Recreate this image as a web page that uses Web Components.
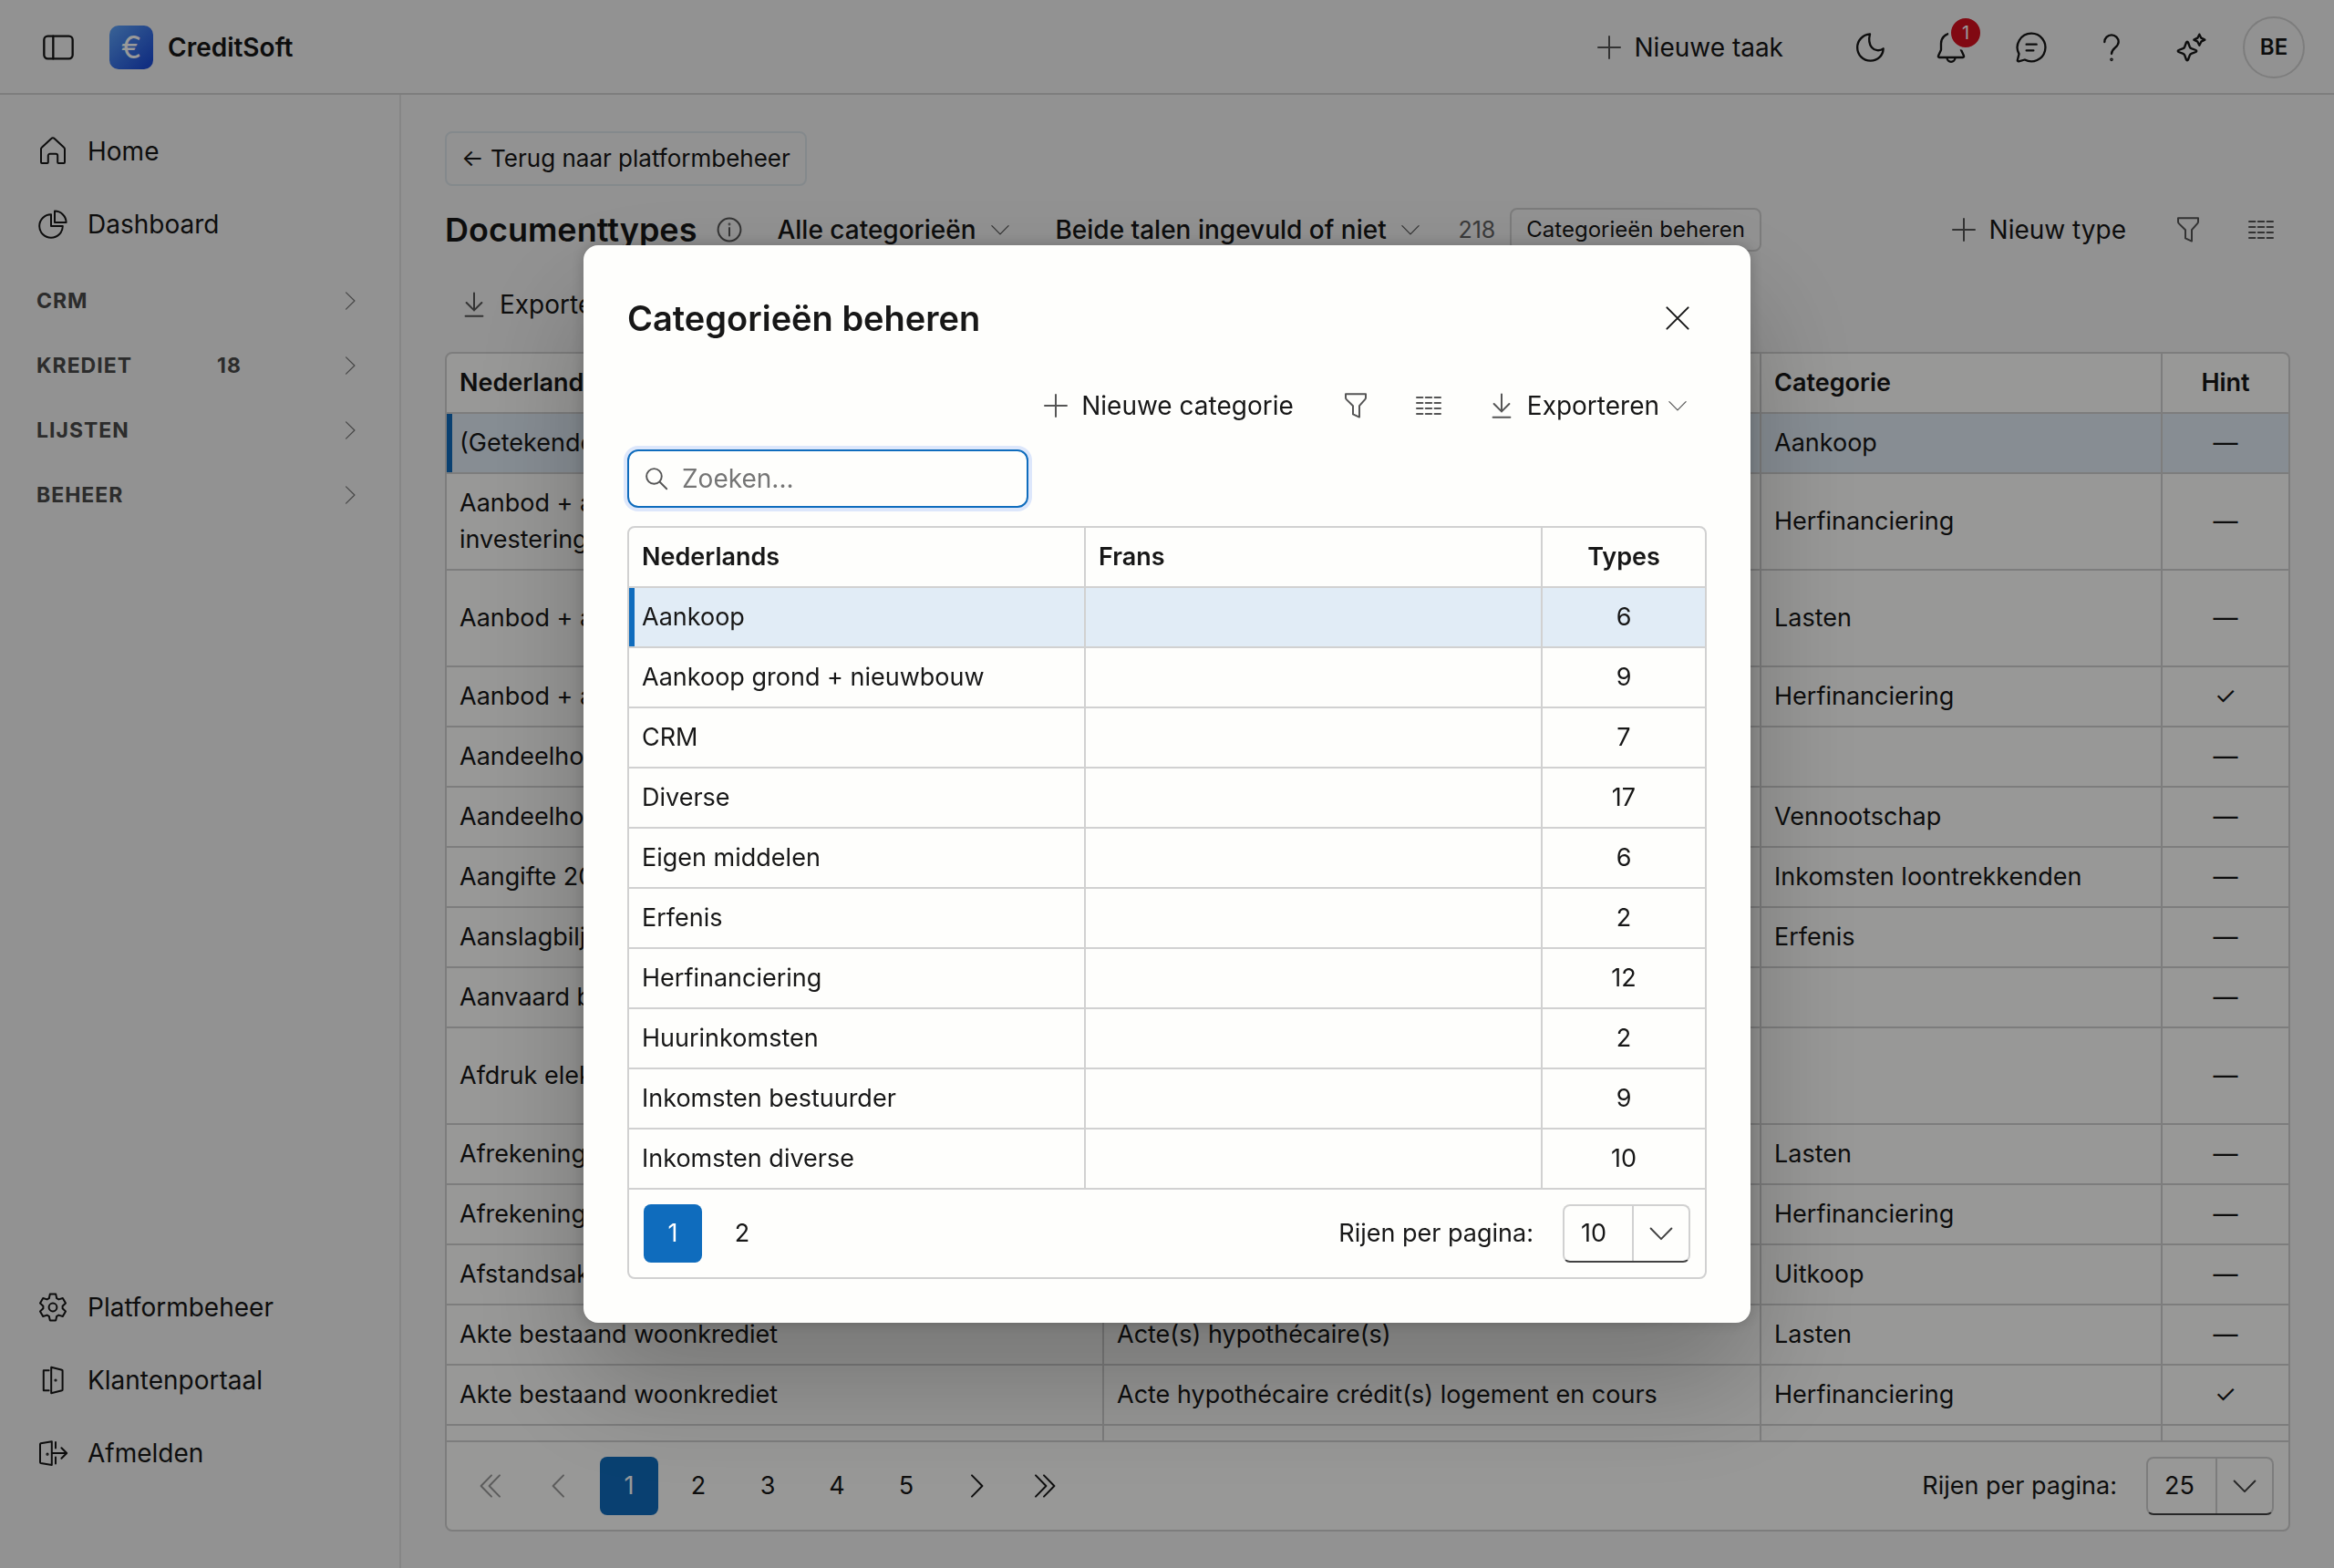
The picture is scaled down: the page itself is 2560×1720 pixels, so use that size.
<!DOCTYPE html>
<html lang="nl">
<head>
<meta charset="utf-8">
<title>CreditSoft - Documenttypes</title>
<style>
    html, body {
        margin: 0;
        height: 100%;
    }
    body {
        --bg: #f3f3f3;
        --surface: #fefefc;
        --text: #171717;
        --muted: #616161;
        --line: #d1d1d1;
        --brand: #0f6cbd;
        --selected: #e1ecf6;
        font: 27px/40px Inter, "Liberation Sans", sans-serif;
        color: var(--text);
        background: var(--bg);
        overflow: hidden;
    }
</style>
</head>
<body>
<credit-app></credit-app>

<script>
// name: [viewBox size, markup]
const icons = {
    panel: [24, '<rect x="2.6" y="4.6" width="18.8" height="14.8" rx="2.4"/><path d="M8.6 4.6v14.8"/>'],
    plus: [20, '<path d="M10 4v12M4 10h12"/>'],
    moon: [24, '<path d="M11.4 3.2C10.6 6.5 10.900 10 12.600 12c1.800 2.200 5.200 2.600 7.600 .8-.2 4.700-3.800 8-8.400 8-5 0-8.700-3.900-8.700-8.800 0-4.500 3.500-8.400 8.300-8.800z"/>'],
    bell: [24, '<path d="M12 2.8a6.6 6.6 0 0 0-6.6 6.6v4.2l-1.8 4c-.2.5.1 1 .6 1h15.6c.5 0 .8-.5.6-1l-1.8-4V9.4A6.6 6.6 0 0 0 12 2.8zM9.3 18.8a2.7 2.7 0 0 0 5.4 0"/>'],
    chat: [24, '<path d="M12 2.8a9.2 9.2 0 1 1-4.3 17.3l-4 1.1c-.5.1-.9-.3-.8-.8l1-4.1A9.2 9.2 0 0 1 12 2.8zM8.8 10h6.6M8.8 14h4.6"/>'],
    question: [24, '<path d="M7.4 8.4a4.6 4.6 0 0 1 9.2 0c0 3.7-4.6 4-4.6 7.8"/><circle cx="12" cy="20" r=".4"/>'],
    sparkle: [24, '<path d="M9 8.2c.3 0 .5.2.6.5l1.1 3c.2.5.5.8 1 1l3 1.1c.6.2.6 1 0 1.2l-3 1.1c-.5.2-.8.5-1 1l-1.1 3c-.2.6-1 .6-1.2 0l-1.1-3c-.2-.5-.5-.8-1-1l-3-1.1c-.6-.2-.6-1 0-1.2l3-1.1c.5-.2.8-.5 1-1l1.1-3c.1-.3.3-.5.6-.5zM17 3.4l1.2 2.4 2.4 1.2-2.4 1.2L17 10.6l-1.2-2.4L13.4 7l2.4-1.2z"/>'],
    home: [20, '<path d="M3.5 8.7c0-.3.1-.6.4-.8L9.3 2.9c.4-.4 1-.4 1.4 0l5.4 5c.3.2.4.5.4.8V16c0 .3-.2.5-.5.5h-2.9a.5.5 0 0 1-.5-.5v-3.600c0-.6-.4-1-1-1H8.400c-.6 0-1 .4-1 1V16c0 .3-.2.5-.5.5H4a.5.5 0 0 1-.5-.5z"/>'],
    chart: [20, '<path d="M9 4.6V11h6.4A6.4 6.4 0 1 1 9 4.6zM11 2.8V9h6.3A6.3 6.3 0 0 0 11 2.8z"/>'],
    gear: [20, '<path d="M8.4 2.8h3.2l.5 2.3 1.1.6 2.200-.7L17 7.800l-1.700 1.600v1.200l1.700 1.600-1.600 2.800-2.200-.7-1.100.6-.5 2.300H8.400l-.5-2.300-1.100-.6-2.200.7L3 12.200l1.700-1.600V9.400L3 7.800 4.600 5l2.200.7 1.100-.6z"/><circle cx="10" cy="10" r="2.2"/>'],
    door: [20, '<path d="M7.8 4.6H4.9v11h2.9M9.1 2.900l5.900 1.500c.2 0 .3.200.3.400v10.400c0 .2-.1.400-.3.400L9.100 17.100z"/><circle cx="11.5" cy="10" r=".3"/>'],
    logout: [20, '<path d="M3 5.100c0-.2.200-.4.400-.5l6-1v12.900l-6-1a.5.500 0 0 1-.4-.5zM11.500 4v3.300M11.500 12.300v3.500M9.400 10h8M14.700 7.100l2.900 2.900-2.900 2.900"/><circle cx="7" cy="10.6" r=".3"/>'],
    info: [20, '<circle cx="10" cy="10" r="6.2"/><path d="M10 9v4.2"/><circle cx="10" cy="7" r=".2"/>'],
    filter: [20, '<path d="M4.5 3.6h11v2c0 .4-.2.8-.5 1.1l-3 3.4v6.2l-3.5-1.600v-4.600L5 6.700c-.3-.3-.5-.7-.5-1.100z"/>'],
    columns: [20, '<path d="M3.5 5.5h3.2M8.4 5.5h3.2M13.3 5.5h3.2M3.5 8.5h3.2M8.4 8.5h3.2M13.3 8.5h3.2M3.5 11.5h3.2M8.4 11.5h3.2M13.3 11.5h3.2M3.5 14.5h3.2M8.4 14.5h3.2M13.3 14.5h3.2"/>'],
    download: [20, '<path d="M10 3.7v9.5M5.8 9l4.2 4.2L14.2 9M5.3 16.4h9.4"/>'],
    down: [20, '<path d="M2.4 6.3l7.6 7.8 7.6-7.8"/>'],
    right: [20, '<path d="M6.3 2.4l7.8 7.600-7.800 7.600"/>'],
    search: [20, '<circle cx="8.4" cy="8.4" r="5.2"/><path d="M12.2 12.200l4.800 4.800"/>'],
    close: [20, '<path d="M4.2 4.2l11.6 11.6M15.8 4.2L4.2 15.8"/>'],
    first: [20, '<path d="M10.5 4.2L4.8 10l5.7 5.8M15 4.2L9.3 10l5.7 5.8"/>'],
    prev: [20, '<path d="M12 4.2L6.3 10l5.7 5.8"/>'],
    next: [20, '<path d="M8 4.2l5.7 5.8L8 15.8"/>'],
    last: [20, '<path d="M5 4.2l5.7 5.8L5 15.8M9.5 4.2l5.7 5.8-5.7 5.8"/>'],
};

class UiIcon extends HTMLElement {
    constructor() {
        super();
        this.attachShadow({ mode: 'open' });
    }

    connectedCallback() {
        const [box, shape] = icons[this.getAttribute('name')];
        const size = this.getAttribute('size') || 40;
        const stroke = this.getAttribute('stroke') || (box === 24 ? 1.4 : 1);
        this.shadowRoot.innerHTML = `
            <style>
            :host { display: inline-flex; flex: none; }
            </style>
            <svg width="${size}" height="${size}" viewBox="0 0 ${box} ${box}" fill="none" stroke="currentColor"
                stroke-width="${stroke}" stroke-linecap="round" stroke-linejoin="round" aria-hidden="true">${shape}</svg>
        `;
    }
}

// Flat button with an optional icon, text and menu arrow
class ToolButton extends HTMLElement {
    constructor() {
        super();
        this.attachShadow({ mode: 'open' });
    }

    connectedCallback() {
        const icon = this.getAttribute('icon');
        const label = this.getAttribute('label') || '';
        this.shadowRoot.innerHTML = `
            <style>
            :host { display: inline-flex; flex: none; font-size: 28px; }
            button {
                display: flex;
                align-items: center;
                justify-content: center;
                gap: 8px;
                height: 64px;
                min-width: 64px;
                padding: 0 20px 0 12px;
                border: 0;
                border-radius: 8px;
                background: none;
                font: inherit;
                color: inherit;
                white-space: nowrap;
            }
            button.icon-only { padding: 0; }
            ui-icon { color: var(--icon-color, #555); }
            </style>
            <button class="${label ? 'icon-only' : ''}" ${label ? `aria-label="${label}"` : ''}>
                <ui-icon name="${icon}"></ui-icon><slot></slot>
                ${this.hasAttribute('menu') ? '<ui-icon name="down" size="24"></ui-icon>' : ''}
            </button>
        `;
    }
}

class OutlineButton extends HTMLElement {
    constructor() {
        super();
        this.attachShadow({ mode: 'open' });
        this.shadowRoot.innerHTML = `
            <style>
            :host { display: inline-flex; flex: none; font-size: 24px; }
            button {
                height: var(--button-height, 48px);
                padding: 0 16px;
                border: 2px solid var(--button-border, #cfcfcf);
                border-radius: 8px;
                background: none;
                font: inherit;
                color: inherit;
                white-space: nowrap;
            }
            </style>
            <button><slot></slot></button>
        `;
    }
}

class FilterSelect extends HTMLElement {
    constructor() {
        super();
        this.attachShadow({ mode: 'open' });
    }

    connectedCallback() {
        this.shadowRoot.innerHTML = `
            <style>
            :host {
                display: inline-flex;
                flex: none;
                align-items: center;
                gap: 14px;
                padding: 0 16px;
                font-size: 28px;
                font-weight: 500;
            }
            select {
                appearance: none;
                border: 0;
                padding: 0;
                background: none;
                font: inherit;
                color: inherit;
            }
            ui-icon { color: #555; }
            </style>
            <select aria-label="${this.getAttribute('label')}">
                <option>${this.getAttribute('value')}</option>
            </select>
            <ui-icon name="down" size="24"></ui-icon>
        `;
    }
}

class AppHeader extends HTMLElement {
    constructor() {
        super();
        this.attachShadow({ mode: 'open' });
        this.shadowRoot.innerHTML = `
            <style>
            :host {
                display: flex;
                align-items: center;
                box-sizing: border-box;
                height: 104px;
                padding: 2px 32px 0 44px;
                border-bottom: 2px solid var(--line);
                font-size: 28px;
            }
            button {
                display: flex;
                align-items: center;
                justify-content: center;
                height: 88px;
                padding: 0;
                border: 0;
                background: none;
                font: inherit;
                color: inherit;
            }
            .brand {
                display: flex;
                align-items: center;
                gap: 16px;
                margin-left: 36px;
                color: inherit;
                font-weight: 600;
                text-decoration: none;
            }
            .logo {
                width: 48px;
                height: 48px;
                border-radius: 10px;
                background: linear-gradient(135deg, #60a5fa, #1d4ed8 90%);
                color: #fff;
                font-size: 34px;
                font-weight: 400;
                line-height: 48px;
                text-align: center;
            }
            .actions {
                display: flex;
                align-items: center;
                margin-left: auto;
            }
            .actions tool-button { margin-right: 32px; }
            .action {
                position: relative;
                width: 88px;
            }
            .badge {
                position: absolute;
                top: 9px;
                left: 41px;
                width: 32px;
                border: 3px solid var(--bg);
                border-radius: 50%;
                background: #d80f1f;
                color: #fff;
                font-size: 20px;
                line-height: 32px;
            }
            .avatar {
                box-sizing: border-box;
                width: 68px;
                height: 68px;
                margin-left: 12px;
                border: 2px solid var(--line);
                border-radius: 50%;
                font-size: 24px;
                font-weight: 600;
            }
            </style>
            <button aria-label="Menu"><ui-icon name="panel"></ui-icon></button>
            <a class="brand" href="#"><span class="logo">€</span>CreditSoft</a>
            <div class="actions">
                <tool-button icon="plus">Nieuwe taak</tool-button>
                <button class="action" aria-label="Thema"><ui-icon name="moon"></ui-icon></button>
                <button class="action" aria-label="Meldingen"><ui-icon name="bell"></ui-icon><span class="badge">1</span></button>
                <button class="action" aria-label="Berichten"><ui-icon name="chat"></ui-icon></button>
                <button class="action" aria-label="Help"><ui-icon name="question"></ui-icon></button>
                <button class="action" aria-label="Assistent"><ui-icon name="sparkle"></ui-icon></button>
                <button class="avatar">BE</button>
            </div>
        `;
    }
}

class NavItem extends HTMLElement {
    constructor() {
        super();
        this.attachShadow({ mode: 'open' });
    }

    connectedCallback() {
        this.shadowRoot.innerHTML = `
            <style>
            :host { display: block; font-size: 28px; }
            a {
                display: flex;
                align-items: center;
                gap: 18px;
                height: 80px;
                padding-left: 38px;
                color: inherit;
                text-decoration: none;
            }
            </style>
            <a href="#"><ui-icon name="${this.getAttribute('icon')}"></ui-icon><slot></slot></a>
        `;
    }
}

class NavSection extends HTMLElement {
    constructor() {
        super();
        this.attachShadow({ mode: 'open' });
    }

    connectedCallback() {
        this.shadowRoot.innerHTML = `
            <style>
            :host { display: block; }
            button {
                display: grid;
                grid-template-columns: 198px 1fr auto;
                align-items: center;
                width: 100%;
                height: 71px;
                padding: 0 42px 0 40px;
                border: 0;
                background: none;
                font: inherit;
                font-size: 23px;
                font-weight: 700;
                letter-spacing: 1px;
                text-align: left;
                color: #4a4a4a;
            }
            ui-icon { color: #777; }
            </style>
            <button><slot></slot><span>${this.getAttribute('count') || ''}</span><ui-icon name="right" size="24"></ui-icon></button>
        `;
    }
}

class AppSidebar extends HTMLElement {
    constructor() {
        super();
        this.attachShadow({ mode: 'open' });
        this.shadowRoot.innerHTML = `
            <style>
            :host {
                display: flex;
                box-sizing: border-box;
                width: 440px;
                border-right: 2px solid #dfdfdf;
            }
            nav {
                display: flex;
                flex-direction: column;
                flex: 1;
                padding: 22px 0 86px;
            }
            .sections { margin-top: 8px; }
            .bottom { margin-top: auto; }
            </style>
            <nav>
                <nav-item icon="home">Home</nav-item>
                <nav-item icon="chart">Dashboard</nav-item>
                <div class="sections">
                    <nav-section><span>CRM</span></nav-section>
                    <nav-section count="18"><span>KREDIET</span></nav-section>
                    <nav-section><span>LIJSTEN</span></nav-section>
                    <nav-section><span>BEHEER</span></nav-section>
                </div>
                <div class="bottom">
                    <nav-item icon="gear">Platformbeheer</nav-item>
                    <nav-item icon="door">Klantenportaal</nav-item>
                    <nav-item icon="logout">Afmelden</nav-item>
                </div>
            </nav>
        `;
    }
}

class GridPager extends HTMLElement {
    constructor() {
        super();
        this.attachShadow({ mode: 'open' });
    }

    connectedCallback() {
        const pages = Number(this.getAttribute('pages'));
        const arrows = this.hasAttribute('arrows');
        let buttons = '';
        for (let i = 1; i <= pages; i++) {
            buttons += `<button class="${i === 1 ? 'current' : ''}">${i}</button>`;
        }
        if (arrows) {
            buttons = `
                <button disabled aria-label="Eerste"><ui-icon name="first"></ui-icon></button>
                <button disabled aria-label="Vorige"><ui-icon name="prev"></ui-icon></button>
                ${buttons}
                <button aria-label="Volgende"><ui-icon name="next"></ui-icon></button>
                <button aria-label="Laatste"><ui-icon name="last"></ui-icon></button>`;
        }
        this.shadowRoot.innerHTML = `
            <style>
            :host {
                display: flex;
                align-items: center;
                justify-content: space-between;
                padding: 16px;
                border-top: 2px solid var(--line);
            }
            .pages { display: flex; gap: 12px; }
            button {
                display: flex;
                align-items: center;
                justify-content: center;
                width: 64px;
                height: 64px;
                padding: 0;
                border: 0;
                border-radius: 8px;
                background: none;
                font: inherit;
                color: inherit;
            }
            button:disabled { color: #999; }
            button.current { background: var(--brand); color: #fff; }
            .size { display: flex; align-items: center; gap: 32px; }
            .box { position: relative; }
            select {
                appearance: none;
                box-sizing: border-box;
                width: 140px;
                height: 64px;
                padding: 0 18px;
                border: 2px solid var(--line);
                border-bottom-color: #424242;
                border-radius: 8px;
                background: none;
                font: inherit;
                color: inherit;
            }
            .arrow {
                position: absolute;
                top: 2px;
                right: 2px;
                bottom: 2px;
                width: 60px;
                display: flex;
                align-items: center;
                justify-content: center;
                border-left: 2px solid var(--line);
                color: #424242;
                pointer-events: none;
            }
            </style>
            <div class="pages">${buttons}</div>
            <div class="size">
                <label for="rows">Rijen per pagina:</label>
                <div class="box">
                    <select id="rows"><option>${this.getAttribute('size')}</option></select>
                    <span class="arrow"><ui-icon name="down" size="30" stroke="1.3"></ui-icon></span>
                </div>
            </div>
        `;
    }
}

class DataGrid extends HTMLElement {
    constructor() {
        super();
        this.attachShadow({ mode: 'open' });
    }

    // columns: [{ title, width, center }], rows: arrays of cell texts
    setData(columns, rows) {
        const cls = i => columns[i].center ? ' class="center"' : '';
        this.shadowRoot.innerHTML = `
            <style>
            :host {
                display: flex;
                flex-direction: column;
                min-height: 0;
                border: 2px solid var(--line);
                border-radius: 8px;
                background: var(--surface);
                overflow: hidden;
            }
            .scroll { flex: 1; min-height: 0; overflow: hidden; }
            table {
                width: 100%;
                table-layout: fixed;
                border-collapse: separate;
                border-spacing: 0;
            }
            th, td {
                box-sizing: border-box;
                height: 66px;
                padding: 12px 14px;
                border-right: 2px solid var(--line);
                border-bottom: 2px solid var(--line);
                text-align: left;
                white-space: pre-line;
            }
            th { font-weight: 600; }
            th:last-child, td:last-child { border-right: 0; }
            tbody tr:last-child td { height: 64px; border-bottom: 0; }
            .center { text-align: center; }
            .selected td { background: var(--selected); }
            .selected td:first-child { box-shadow: inset 6px 0 var(--brand); }
            </style>
            <div class="scroll">
                <table>
                    <colgroup>${columns.map(c => `<col${c.width ? ` style="width: ${c.width}px"` : ''}>`).join('')}</colgroup>
                    <thead><tr>${columns.map((c, i) => `<th${cls(i)}>${c.title}</th>`).join('')}</tr></thead>
                    <tbody>${rows.map((row, r) => `
                        <tr${r === 0 ? ' class="selected"' : ''}>${row.map((cell, i) => `<td${cls(i)}>${cell}</td>`).join('')}</tr>`).join('')}
                    </tbody>
                </table>
            </div>
            <slot></slot>
        `;
    }
}

class DocumentTypes extends HTMLElement {
    constructor() {
        super();
        this.attachShadow({ mode: 'open' });
        this.shadowRoot.innerHTML = `
            <style>
            :host {
                display: flex;
                flex-direction: column;
                align-items: flex-start;
                min-width: 0;
                min-height: 0;
                padding: 40px 48px;
            }
            .back {
                --button-height: 60px;
                --button-border: #dde5ea;
                font-size: 26px;
            }
            .bar {
                display: flex;
                align-items: center;
                align-self: stretch;
                gap: 16px;
                height: 64px;
                margin-top: 16px;
            }
            .second { margin-top: 18px; margin-bottom: 20px; }
            h1 { margin: 0; font-size: 36px; font-weight: 600; }
            .info { color: #555; }
            .count { padding-left: 8px; font-size: 25px; color: var(--muted); }
            .spring { flex: 1; }
            data-grid { flex: 1; align-self: stretch; }
            </style>
            <outline-button class="back">← Terug naar platformbeheer</outline-button>
            <div class="bar">
                <h1>Documenttypes</h1>
                <ui-icon class="info" name="info"></ui-icon>
                <filter-select label="Categorie" value="Alle categorieën"></filter-select>
                <filter-select label="Talen" value="Beide talen ingevuld of niet"></filter-select>
                <span class="count">218</span>
                <outline-button>Categorieën beheren</outline-button>
                <span class="spring"></span>
                <tool-button icon="plus">Nieuw type</tool-button>
                <tool-button icon="filter" label="Filteren"></tool-button>
                <tool-button icon="columns" label="Kolommen"></tool-button>
            </div>
            <div class="bar second">
                <tool-button icon="download" menu>Exporteren</tool-button>
            </div>
            <data-grid><grid-pager pages="5" size="25" arrows></grid-pager></data-grid>
        `;
    }

    connectedCallback() {
        this.shadowRoot.querySelector('data-grid').setData([
            { title: 'Nederlands' },
            { title: 'Frans' },
            { title: 'Categorie', width: 440 },
            { title: 'Hint', width: 138, center: true },
        ], [
            ['(Getekende)', 'Compromis (signé)', 'Aankoop', '—'],
            ['Aanbod + akte\ninvestering', 'Offre + acte', 'Herfinanciering', '—'],
            ['Aanbod + akte', 'Offre + acte\nde crédit', 'Lasten', '—'],
            ['Aanbod + akte', 'Offre + acte', 'Herfinanciering', '✓'],
            ['Aandeelhouder', 'Actionnaire', '', '—'],
            ['Aandeelhouder', 'Actionnaire', 'Vennootschap', '—'],
            ['Aangifte 2025', 'Déclaration 2025', 'Inkomsten loontrekkenden', '—'],
            ['Aanslagbiljet', 'Avertissement', 'Erfenis', '—'],
            ['Aanvaard bod', 'Offre acceptée', '', '—'],
            ['Afdruk elektr.', 'Impression\nélectronique', '', '—'],
            ['Afrekening', 'Décompte', 'Lasten', '—'],
            ['Afrekening', 'Décompte', 'Herfinanciering', '—'],
            ['Afstandsakte', 'Acte de cession', 'Uitkoop', '—'],
            ['Akte bestaand woonkrediet', 'Acte(s) hypothécaire(s)', 'Lasten', '—'],
            ['Akte bestaand woonkrediet', 'Acte hypothécaire crédit(s) logement en cours', 'Herfinanciering', '✓'],
            ['', '', '', ''],
        ]);
    }
}

class ModalDialog extends HTMLElement {
    constructor() {
        super();
        this.attachShadow({ mode: 'open' });
    }

    connectedCallback() {
        this.shadowRoot.innerHTML = `
            <style>
            :host {
                position: fixed;
                inset: 0;
                display: grid;
                place-items: center;
                background: rgba(0, 0, 0, .4);
            }
            section {
                box-sizing: border-box;
                width: 50%;
                padding: 48px;
                border-radius: 16px;
                background: var(--surface);
                box-shadow: 0 0 16px rgba(0, 0, 0, .2), 0 64px 128px rgba(0, 0, 0, .24);
            }
            header {
                display: flex;
                align-items: center;
                justify-content: space-between;
                margin-bottom: 32px;
                --icon-color: var(--text);
            }
            h2 { margin: 0; font-size: 38px; font-weight: 600; }
            </style>
            <section role="dialog" aria-modal="true" aria-labelledby="title">
                <header>
                    <h2 id="title">${this.getAttribute('heading')}</h2>
                    <tool-button icon="close" label="Sluiten"></tool-button>
                </header>
                <slot></slot>
            </section>
        `;
    }
}

class CategoryManager extends HTMLElement {
    constructor() {
        super();
        this.attachShadow({ mode: 'open' });
        this.shadowRoot.innerHTML = `
            <style>
            :host { display: block; }
            .bar {
                display: flex;
                justify-content: flex-end;
                gap: 16px;
                margin-bottom: 16px;
            }
            .search {
                display: flex;
                align-items: center;
                gap: 12px;
                box-sizing: border-box;
                width: 440px;
                height: 64px;
                margin-bottom: 20px;
                padding: 0 14px;
                border: 2px solid var(--brand);
                border-radius: 12px;
                box-shadow: 0 0 0 4px #dde7fb;
                font-size: 28px;
                color: #555;
            }
            input {
                flex: 1;
                min-width: 0;
                padding: 0;
                border: 0;
                outline: 0;
                background: none;
                font: inherit;
                color: var(--text);
            }
            input::placeholder { color: #757575; }
            </style>
            <div class="bar">
                <tool-button icon="plus">Nieuwe categorie</tool-button>
                <tool-button icon="filter" label="Filteren"></tool-button>
                <tool-button icon="columns" label="Kolommen"></tool-button>
                <tool-button icon="download" menu>Exporteren</tool-button>
            </div>
            <label class="search">
                <ui-icon name="search" size="32" stroke="1.2"></ui-icon>
                <input type="search" placeholder="Zoeken..." aria-label="Zoeken">
            </label>
            <data-grid><grid-pager pages="2" size="10"></grid-pager></data-grid>
        `;
    }

    connectedCallback() {
        this.shadowRoot.querySelector('data-grid').setData([
            { title: 'Nederlands' },
            { title: 'Frans' },
            { title: 'Types', width: 178, center: true },
        ], [
            ['Aankoop', '', 6],
            ['Aankoop grond + nieuwbouw', '', 9],
            ['CRM', '', 7],
            ['Diverse', '', 17],
            ['Eigen middelen', '', 6],
            ['Erfenis', '', 2],
            ['Herfinanciering', '', 12],
            ['Huurinkomsten', '', 2],
            ['Inkomsten bestuurder', '', 9],
            ['Inkomsten diverse', '', 10],
        ]);
    }
}

class CreditApp extends HTMLElement {
    constructor() {
        super();
        this.attachShadow({ mode: 'open' });
        this.shadowRoot.innerHTML = `
            <style>
            :host {
                display: grid;
                grid-template: auto minmax(0, 1fr) / auto minmax(0, 1fr);
                height: 100vh;
            }
            app-header { grid-column: 1 / -1; }
            </style>
            <app-header></app-header>
            <app-sidebar></app-sidebar>
            <document-types></document-types>
            <modal-dialog heading="Categorieën beheren">
                <category-manager></category-manager>
            </modal-dialog>
        `;
    }
}

customElements.define('ui-icon', UiIcon);
customElements.define('tool-button', ToolButton);
customElements.define('outline-button', OutlineButton);
customElements.define('filter-select', FilterSelect);
customElements.define('app-header', AppHeader);
customElements.define('nav-item', NavItem);
customElements.define('nav-section', NavSection);
customElements.define('app-sidebar', AppSidebar);
customElements.define('grid-pager', GridPager);
customElements.define('data-grid', DataGrid);
customElements.define('document-types', DocumentTypes);
customElements.define('modal-dialog', ModalDialog);
customElements.define('category-manager', CategoryManager);
customElements.define('credit-app', CreditApp);
</script>
</body>
</html>
